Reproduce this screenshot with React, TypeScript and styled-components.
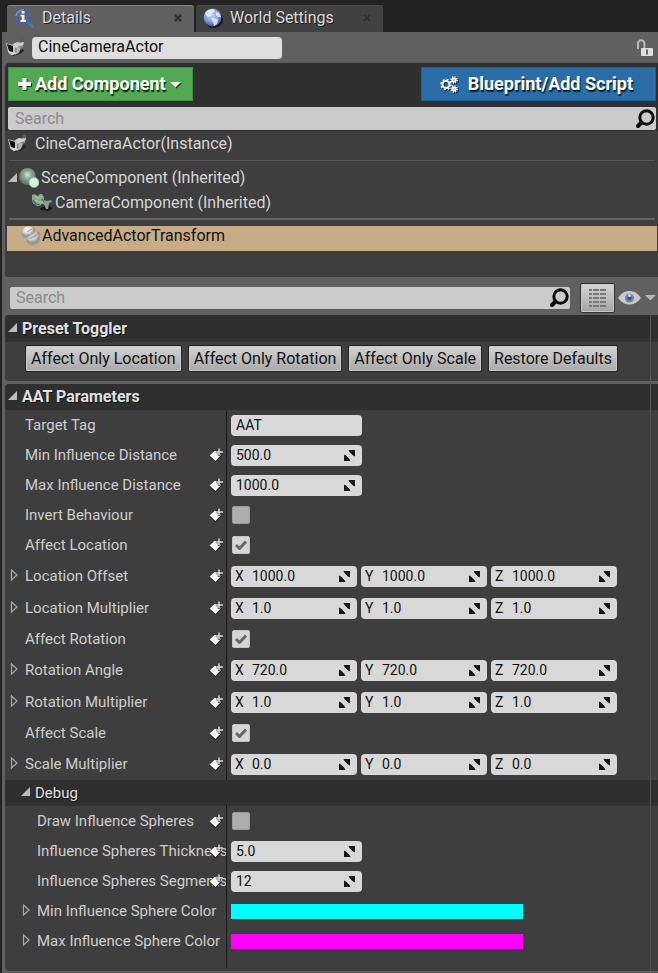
import React, { useState } from "react";
import styled, { createGlobalStyle, css } from "styled-components";

const GlobalStyle = createGlobalStyle`
  *, *::before, *::after { box-sizing: border-box; }
  body {
    margin: 0;
    background: #222222;
    color: #dcdcdc;
    font: 14px/20px Roboto, "Liberation Sans", sans-serif;
  }
  button, input {
    margin: 0;
    padding: 0;
    border: 0;
    color: inherit;
    font: inherit;
    background: none;
    letter-spacing: normal;
  }
  button { cursor: pointer; }
  svg { display: block; flex: none; }
`;

/* ---------- window chrome ---------- */

const Window = styled.main`
  min-height: 100vh;
  padding: 5px 0 0 2px;
  background: #222222;
  display: flex;
  flex-direction: column;
`;

const TabBar = styled.div`
  display: flex;
  gap: 2px;
  padding-left: 5px;
`;

const Tab = styled.div<{ $active?: boolean }>`
  display: flex;
  align-items: center;
  width: 187px;
  height: 27px;
  padding: 0 12px 2px 7px;
  border-top: 1px solid ${(p) => (p.$active ? "#a08a2c" : "#4a4a4a")};
  border-radius: 3px 3px 0 0;
  background: ${(p) => (p.$active ? "#606060" : "#414141")};
`;

const TabTitle = styled.button`
  flex: 1;
  display: flex;
  align-items: center;
  gap: 7px;
  font-size: 16px;
  color: #dadada;
  text-align: left;
  text-shadow: 1px 1px 0 #1c1c1c;
  white-space: nowrap;
`;

const PlainButton = styled.button`
  display: flex;
  align-items: center;
  justify-content: center;
  flex: none;
`;

const Panel = styled.div`
  flex: 1;
  background: #606060;
  padding-left: 3px;
  padding-bottom: 2px;
`;

const NameRow = styled.div`
  display: flex;
  align-items: center;
  height: 31px;
  padding-right: 4px;
`;

const ActorName = styled.input`
  width: 250px;
  height: 22px;
  margin: 0 auto 0 7px;
  padding: 0 6px 2px;
  border-radius: 4px;
  background: #dfdfdf;
  color: #111111;
  font-size: 16px;
`;

/* ---------- component tree ---------- */

const Components = styled.section`
  border-radius: 4px 0 0 4px;
  background: #2f2f2f;
  overflow: hidden;
`;

const ActionBar = styled.div`
  display: flex;
  justify-content: space-between;
  padding: 4px 2px 6px 3px;
`;

const ActionButton = styled.button<{ $tone: "green" | "blue" }>`
  display: flex;
  align-items: center;
  height: 34px;
  color: #ffffff;
  font-size: 18px;
  font-weight: 700;
  white-space: nowrap;
  text-shadow: 1px 2px 1px rgba(0, 0, 0, 0.75);
  svg { filter: drop-shadow(1px 1px 0 rgba(0, 0, 0, 0.7)); }
  ${(p) =>
    p.$tone === "green"
      ? css`
          gap: 4px;
          padding: 0 11px 0 9px;
          background: #52a954;
          border: 1px solid #3f9442;
        `
      : css`
          gap: 10px;
          padding: 0 22px 0 18px;
          background: #2a6da8;
          border: 1px solid #1f5f98;
        `}
`;

const SearchBox = styled.label<{ $inset?: boolean }>`
  display: flex;
  align-items: center;
  flex: 1;
  height: ${(p) => (p.$inset ? "22px" : "23px")};
  margin: ${(p) => (p.$inset ? "0" : "0 2px 0 3px")};
  padding: 0 1px 0 ${(p) => (p.$inset ? 6 : 7)}px;
  border-radius: 2px;
  background: #cbcbcb;
`;

const SearchInput = styled.input`
  flex: 1;
  min-width: 0;
  font-size: 16px;
  color: #222222;
  outline: none;
  &::placeholder { color: #8a8a8a; opacity: 1; }
`;

const Tree = styled.div`
  margin-top: 1px;
  padding-bottom: 26px;
  background: #3e3e3e;
`;

const TreeRow = styled.div<{ $indent: number; $gap?: number; $selected?: boolean }>`
  display: flex;
  align-items: center;
  gap: ${(p) => p.$gap ?? 2}px;
  height: 25px;
  margin: 0 1px 0 2px;
  padding-left: ${(p) => p.$indent}px;
  padding-bottom: ${(p) => (p.$selected ? 6 : 0)}px;
  font-size: 16px;
  white-space: nowrap;
  color: ${(p) => (p.$selected ? "#111111" : "#d6d6d6")};
  background: ${(p) => (p.$selected ? "#c7ac88" : "transparent")};
`;

const Divider = styled.hr<{ $strong?: boolean }>`
  height: ${(p) => (p.$strong ? 2 : 1)}px;
  margin: ${(p) => (p.$strong ? "3px 3px 6px 4px" : "4px 3px 4px 4px")};
  border: 0;
  background: ${(p) => (p.$strong ? "#636363" : "#585858")};
`;

/* ---------- details ---------- */

const FilterBar = styled.div`
  display: flex;
  align-items: center;
  height: 38px;
  padding: 6px 2px 3px 5px;
`;

const ViewButton = styled(PlainButton)`
  width: 35px;
  height: 30px;
  margin: 0 3px 0 10px;
  border: 1px solid #333333;
  border-radius: 2px;
  background: linear-gradient(#d6d6d6, #a4a4a4);
  box-shadow: inset 0 0 0 1px #c8c8c8;
`;

const EyeButton = styled(PlainButton)`
  gap: 4px;
`;

const Details = styled.div`
  position: relative;
  display: flex;
  flex-direction: column;
  gap: 3px;
  &::after {
    content: "";
    position: absolute;
    inset: 0 7px 0 auto;
    width: 1px;
    background: #575757;
    pointer-events: none;
  }
`;

const Section = styled.section`
  border-radius: 4px 0 0 4px;
  background: #3e3e3e;
  overflow: hidden;
`;

const SectionHeader = styled.button<{ $nested?: boolean; $tall?: boolean }>`
  display: flex;
  align-items: center;
  gap: 5px;
  width: 100%;
  height: ${(p) => (p.$tall ? 27 : 26)}px;
  padding-left: ${(p) => (p.$nested ? 16 : 3)}px;
  background: #2f2f2f;
  color: #e0e0e0;
  font-size: ${(p) => (p.$nested ? 15 : 16)}px;
  font-weight: ${(p) => (p.$nested ? 400 : 700)};
  text-shadow: 1px 1px 0 #111111;
  svg { margin-bottom: 3px; }
`;

const PresetBar = styled.div`
  display: flex;
  flex-wrap: wrap;
  gap: 6px;
  padding: 3px 20px 9px 20px;
`;

const PresetButton = styled.button`
  height: 27px;
  padding: 0 5px;
  border: 1px solid #222222;
  border-radius: 2px;
  background: linear-gradient(#d4d4d4, #a8a8a8);
  box-shadow: inset 0 0 0 1px #cccccc;
  color: #111111;
  font-size: 16px;
  white-space: nowrap;
`;

const Property = styled.div<{ $tall?: boolean }>`
  display: grid;
  grid-template-columns: 221px 1fr;
  height: ${(p) => (p.$tall ? 32 : 30)}px;
`;

const NameCell = styled.div<{ $nested?: boolean }>`
  position: relative;
  display: flex;
  align-items: center;
  overflow: hidden;
  padding-left: ${(p) => (p.$nested ? 17 : 5)}px;
`;

const ExpanderSlot = styled.span`
  display: flex;
  flex: none;
  width: 15px;
  padding-bottom: 2px;
`;

const PropertyLabel = styled.label`
  white-space: nowrap;
  font-size: 15px;
  color: #cecece;
`;

const KeyButton = styled(PlainButton)`
  position: absolute;
  top: 0;
  bottom: 0;
  right: 3px;
`;

const ValueCell = styled.div`
  display: flex;
  align-items: center;
  gap: 4px;
  padding-left: 4px;
  border-left: 1px solid #191919;
`;

const Field = styled.div<{ $axis?: boolean }>`
  display: flex;
  align-items: center;
  width: ${(p) => (p.$axis ? 126 : 131)}px;
  height: 21px;
  padding: 0 7px 0 ${(p) => (p.$axis ? 4 : 5)}px;
  border-radius: 4px;
  background: #d8d8d8;
  color: #111111;
`;

const AxisLabel = styled.label`
  flex: none;
  width: 17px;
`;

const FieldInput = styled.input`
  flex: 1;
  min-width: 0;
  width: 0;
`;

const Check = styled.input`
  appearance: none;
  width: 18px;
  height: 18px;
  margin-left: 1px;
  border-radius: 2px;
  border: 1px solid #9b9b9b;
  background: #adadad;
  cursor: pointer;
  &:checked { background: #d6d6d6; border-color: #c4c4c4; }
`;

const CheckWrap = styled.span`
  display: grid;
  > * { grid-area: 1 / 1; }
  svg { margin: 4px 0 0 4px; pointer-events: none; }
`;

const Swatch = styled.button<{ $color: string }>`
  width: 292px;
  height: 15px;
  background: ${(p) => p.$color};
`;

const BodyEnd = styled.div`
  height: 12px;
  margin: 0 0 3px 221px;
  border-left: 1px solid #191919;
`;

/* ---------- icons ---------- */

const InfoIcon = () => (
  <svg width="21" height="21" viewBox="0 0 21 21">
    <path d="M14 14.500l4.500 4" stroke="#4a76cc" strokeWidth="3" strokeLinecap="round" />
    <circle cx="9" cy="9" r="7.500" fill="#5b6472" stroke="#3c62b0" strokeWidth="1.800" />
    <path d="M2 8a7 7 0 0 1 8-6" fill="none" stroke="#7f9fe0" strokeWidth="1.200" />
    <rect x="7.500" y="3" width="3" height="2.600" fill="#eeeeee" />
    <path d="M6.500 6.800h4v5.200H12v2H6.500v-2h1.200V8.600H6.500z" fill="#eeeeee" />
  </svg>
);

const GlobeIcon = () => (
  <svg width="20" height="20" viewBox="0 0 20 20">
    <defs>
      <radialGradient id="globe" cx="45%" cy="35%" r="65%">
        <stop offset="0" stopColor="#c3d2f6" />
        <stop offset="0.600" stopColor="#86a0e0" />
        <stop offset="1" stopColor="#3d539a" />
      </radialGradient>
    </defs>
    <ellipse cx="11" cy="12" rx="9" ry="8" fill="#1b1b1b" />
    <circle cx="9.500" cy="9.500" r="9" fill="url(#globe)" />
    <path d="M2 5l3-3 5-1 2 2-3 2-1 3-3 1-2-2zM8 10l4 0 3 2-1 4-3 2-1-4zM13 4l3 1 2 4-3 0-2-2z" fill="#eef3ff" opacity="0.800" />
  </svg>
);

const CloseIcon = () => (
  <svg width="8" height="8" viewBox="0 0 8 8">
    <rect width="8" height="8" fill="#4a4a4a" opacity="0.500" />
    <path d="M1 1l6 6M7 1L1 7" stroke="#303030" strokeWidth="1.800" />
  </svg>
);

const CameraActorIcon = () => (
  <svg width="20" height="20" viewBox="0 0 20 20">
    <path d="M7 15l7-3 4-1 1 2-4 3-7 2z" fill="#242424" />
    <path d="M9 7l5-3 5 0-1 5-2 1-2 5-4 2-1-3z" fill="#8b8b8b" />
    <path d="M8 6l4-2 3 1 4-1-1 3-4 1-2 2-3-1z" fill="#cfcfcf" />
    <path d="M15 4l1-3 3-1 0 4z" fill="#5c5c5c" />
    <path d="M12 10l3-1 0 3-2 3-2 1z" fill="#b6b6b6" />
    <path d="M1 5l3 1 6 1 0 8-3 2-4-3z" fill="#c4c4c4" />
    <path d="M2 6l6 2 0 6-4-1z" fill="#0c0c0c" />
    <path d="M3 13l4 2 3-1 1 2-4 1-3-2z" fill="#d8d8d8" />
  </svg>
);

const LockIcon = () => (
  <svg width="18" height="18" viewBox="0 0 18 18" fill="none">
    <path d="M2 10V4.500a3.200 3.200 0 0 1 6.400 0V9" stroke="#b8b8b8" strokeWidth="2" />
    <rect x="5" y="9" width="12" height="8" rx="1" fill="#e0e0e0" />
    <path d="M11 10.500v5" stroke="#666666" strokeWidth="2" />
  </svg>
);

const PlusIcon = () => (
  <svg width="13" height="14" viewBox="0 0 13 14">
    <path d="M6.500 1v12M0 7h13" stroke="#ffffff" strokeWidth="4" />
  </svg>
);

const CaretIcon = ({ color = "#ffffff" }: { color?: string }) => (
  <svg width="11" height="7" viewBox="0 0 11 7">
    <path d="M0 1h11L5.500 6.500z" fill={color} />
  </svg>
);

const Gear = ({ x, y, r }: { x: number; y: number; r: number }) => (
  <g fill="none" stroke="#ffffff">
    <circle cx={x} cy={y} r={r} strokeWidth="2" />
    <circle cx={x} cy={y} r={r + 1.5} strokeWidth="1.500" strokeDasharray={`${(r + 1.5) * 0.3927} ${(r + 1.5) * 0.3927}`} />
  </g>
);

const GearsIcon = () => (
  <svg width="18" height="17" viewBox="0 0 18 17">
    <Gear x={6} y={8.5} r={3.5} />
    <Gear x={14} y={4} r={1.6} />
    <Gear x={14} y={13} r={1.6} />
  </svg>
);

const SearchIcon = () => (
  <svg width="20" height="20" viewBox="0 0 20 20" fill="none" stroke="#0c0c0c">
    <circle cx="11.500" cy="8.500" r="6.700" strokeWidth="3" />
    <path d="M6.500 13.500L3 17" strokeWidth="4" strokeLinecap="round" />
  </svg>
);

const SceneIcon = () => (
  <svg width="20" height="20" viewBox="0 0 20 20">
    <defs>
      <radialGradient id="scene" cx="50%" cy="40%">
        <stop offset="0" stopColor="#cfe8d4" />
        <stop offset="0.500" stopColor="#8da996" />
        <stop offset="1" stopColor="#64796b" />
      </radialGradient>
    </defs>
    <circle cx="8.500" cy="8.500" r="8.500" fill="url(#scene)" />
    <circle cx="15" cy="14.500" r="5" fill="#d5f5dc" stroke="#98b5a0" strokeWidth="0.800" />
  </svg>
);

const CameraComponentIcon = () => (
  <svg width="21" height="19" viewBox="0 0 21 19">
    <path d="M8 15l6-2 5 1 1 2-4 2-7-1z" fill="#161616" />
    <path d="M0 2l2-1 4 2 2-2 2 0 2 3 0 3 3 1 4-1 1 2-3 1-1 6-2 0-2-5-2 0-2 2-3 0-4-3-1-3z" fill="#86a38f" />
    <path d="M2 3l4 2 4-2M3 7l5 2 3 0" fill="none" stroke="#a3c2ac" strokeWidth="1.300" />
    <path d="M1 7l3 4 4 1M10 6l2 3" fill="none" stroke="#4c6354" strokeWidth="1.200" />
  </svg>
);

const ActorComponentIcon = () => (
  <svg width="20" height="20" viewBox="0 0 20 20">
    <defs>
      <radialGradient id="half" cx="40%" cy="30%">
        <stop offset="0" stopColor="#ffffff" />
        <stop offset="0.700" stopColor="#d2d2d2" />
        <stop offset="1" stopColor="#969696" />
      </radialGradient>
    </defs>
    <path d="M1 9C0 4 4 0 8 0c4 0 7 3 6 5L5 12C2 12 1 11 1 9z" fill="url(#half)" />
    <path d="M6 6l5-3M6 9l2-1" stroke="#a4a4a4" />
    <path d="M5 13l13-8c3 6 1 14-7 14-4 0-6-3-6-6z" fill="url(#half)" />
    <path d="M6 13l12-7-3 5-5 2z" fill="#8c8c8c" opacity="0.600" />
  </svg>
);

const ListIcon = () => (
  <svg width="17" height="18" viewBox="0 0 17 18" stroke="#777777" strokeWidth="2">
    <path d="M0 1h3M4 1h6M11 1h6M0 5h3M4 5h6M11 5h6M0 9h3M4 9h6M11 9h6M0 13h3M4 13h6M11 13h6M0 17h3M4 17h6M11 17h6" />
  </svg>
);

const EyeIcon = () => (
  <svg width="23" height="14" viewBox="0 0 23 14">
    <path d="M0 7C4 1 8 0 11.500 0S19 1 23 7c-4 5-8 6.500-11.500 6.500S4 12 0 7z" fill="#c9c9c9" />
    <circle cx="11.500" cy="7" r="4.500" fill="#6c80a8" />
    <circle cx="11.500" cy="7" r="2" fill="#354a75" />
    <circle cx="11.500" cy="4.500" r="1.500" fill="#dbe5f5" />
  </svg>
);

const ExpandedIcon = () => (
  <svg width="9" height="9" viewBox="0 0 9 9">
    <path d="M9 0v9H0z" fill="#bcbcbc" />
  </svg>
);

const CollapsedIcon = () => (
  <svg width="8" height="12" viewBox="0 0 8 12">
    <path d="M1.500 1l5.500 5-5.500 5z" fill="none" stroke="#a8a8a8" strokeWidth="1.200" />
  </svg>
);

const KeyIcon = () => (
  <svg width="14" height="14" viewBox="0 0 14 14">
    <path d="M0 8l6.500-6.500L13 8l-6.500 6z" fill="#1c1c1c" />
    <path d="M0.500 7.500L6 2.500l6 4.500-5.500 6z" fill="#f6f6f6" />
    <path d="M10 1v7M7 4H14" stroke="#2c2c2c" strokeWidth="2.400" />
    <path d="M10 0.500v7M6.500 4H14" stroke="#dddddd" strokeWidth="1.500" />
  </svg>
);

const SpinIcon = () => (
  <svg width="11" height="11" viewBox="0 0 11 11" fill="#161616">
    <path d="M4.500 0H11v6.500L9 5.500 5.500 2zM0 4.500L2 5.500 5.500 9l1 2H0z" />
  </svg>
);

const CheckIcon = () => (
  <svg width="12" height="10" viewBox="0 0 12 10">
    <path d="M1 5l3.500 3.500L11 1.500" fill="none" stroke="#686868" strokeWidth="3" />
  </svg>
);

/* ---------- data and rows ---------- */

type Item = { name: string; kind: "text" | "number" | "check" | "vector" | "color"; value: string };

const parameters: Item[] = [
  { name: "Target Tag", kind: "text", value: "AAT" },
  { name: "Min Influence Distance", kind: "number", value: "500.0" },
  { name: "Max Influence Distance", kind: "number", value: "1000.0" },
  { name: "Invert Behaviour", kind: "check", value: "" },
  { name: "Affect Location", kind: "check", value: "on" },
  { name: "Location Offset", kind: "vector", value: "1000.0" },
  { name: "Location Multiplier", kind: "vector", value: "1.0" },
  { name: "Affect Rotation", kind: "check", value: "on" },
  { name: "Rotation Angle", kind: "vector", value: "720.0" },
  { name: "Rotation Multiplier", kind: "vector", value: "1.0" },
  { name: "Affect Scale", kind: "check", value: "on" },
  { name: "Scale Multiplier", kind: "vector", value: "0.0" },
];

const debugParameters: Item[] = [
  { name: "Draw Influence Spheres", kind: "check", value: "" },
  { name: "Influence Spheres Thickness", kind: "number", value: "5.0" },
  { name: "Influence Spheres Segments", kind: "number", value: "12" },
  { name: "Min Influence Sphere Color", kind: "color", value: "#00ffff" },
  { name: "Max Influence Sphere Color", kind: "color", value: "#ff00ff" },
];

const presets = ["Affect Only Location", "Affect Only Rotation", "Affect Only Scale", "Restore Defaults"];

function CheckField({ id, initial }: { id: string; initial: boolean }) {
  const [checked, setChecked] = useState(initial);
  return (
    <CheckWrap>
      <Check id={id} type="checkbox" checked={checked} onChange={() => setChecked(!checked)} />
      {checked && <CheckIcon />}
    </CheckWrap>
  );
}

function PropertyRow({ item, nested }: { item: Item; nested?: boolean }) {
  const id = item.name.toLowerCase().replace(/ /g, "-");
  const { kind, name, value } = item;
  const expandable = kind === "vector" || kind === "color";
  const firstId = kind === "vector" ? `${id}-X` : id;
  return (
    <Property $tall={kind === "vector"}>
      <NameCell $nested={nested}>
        <ExpanderSlot>
          {expandable && (
            <PlainButton aria-label={`Expand ${name}`}>
              <CollapsedIcon />
            </PlainButton>
          )}
        </ExpanderSlot>
        <PropertyLabel htmlFor={firstId}>{name}</PropertyLabel>
        {kind !== "text" && kind !== "color" && (
          <KeyButton aria-label={`Add keyframe for ${name}`}>
            <KeyIcon />
          </KeyButton>
        )}
      </NameCell>
      <ValueCell>
        {(kind === "text" || kind === "number") && (
          <Field>
            <FieldInput id={id} defaultValue={value} />
            {kind === "number" && <SpinIcon />}
          </Field>
        )}
        {kind === "check" && <CheckField id={id} initial={value === "on"} />}
        {kind === "vector" &&
          ["X", "Y", "Z"].map((axis) => (
            <Field $axis key={axis}>
              <AxisLabel htmlFor={`${id}-${axis}`}>{axis}</AxisLabel>
              <FieldInput id={`${id}-${axis}`} defaultValue={value} />
              <SpinIcon />
            </Field>
          ))}
        {kind === "color" && <Swatch id={id} $color={value} />}
      </ValueCell>
    </Property>
  );
}

export default function App() {
  return (
    <>
      <GlobalStyle />
      <Window>
        <TabBar>
          <Tab $active>
            <TabTitle><InfoIcon />Details</TabTitle>
            <PlainButton aria-label="Close Details"><CloseIcon /></PlainButton>
          </Tab>
          <Tab>
            <TabTitle><GlobeIcon />World Settings</TabTitle>
            <PlainButton aria-label="Close World Settings"><CloseIcon /></PlainButton>
          </Tab>
        </TabBar>
        <Panel>
          <NameRow>
            <CameraActorIcon />
            <ActorName aria-label="Actor name" defaultValue="CineCameraActor" />
            <PlainButton aria-label="Lock selection"><LockIcon /></PlainButton>
          </NameRow>

          <Components>
            <ActionBar>
              <ActionButton $tone="green"><PlusIcon />Add Component<CaretIcon /></ActionButton>
              <ActionButton $tone="blue"><GearsIcon />Blueprint/Add Script</ActionButton>
            </ActionBar>
            <SearchBox>
              <SearchInput aria-label="Search components" placeholder="Search" />
              <SearchIcon />
            </SearchBox>
            <Tree>
              <TreeRow $indent={0} $gap={8}><CameraActorIcon />CineCameraActor(Instance)</TreeRow>
              <Divider />
              <TreeRow $indent={1}>
                <PlainButton aria-label="Collapse SceneComponent"><ExpandedIcon /></PlainButton>
                <SceneIcon />SceneComponent (Inherited)
              </TreeRow>
              <TreeRow $indent={25}><CameraComponentIcon />CameraComponent (Inherited)</TreeRow>
              <Divider $strong />
              <TreeRow $indent={14} $gap={1} $selected><ActorComponentIcon />AdvancedActorTransform</TreeRow>
            </Tree>
          </Components>

          <FilterBar>
            <SearchBox $inset>
              <SearchInput aria-label="Search details" placeholder="Search" />
              <SearchIcon />
            </SearchBox>
            <ViewButton aria-label="Property matrix"><ListIcon /></ViewButton>
            <EyeButton aria-label="View options"><EyeIcon /><CaretIcon color="#b8b8b8" /></EyeButton>
          </FilterBar>

          <Details>
            <Section>
              <SectionHeader $tall><ExpandedIcon />Preset Toggler</SectionHeader>
              <PresetBar>
                {presets.map((preset) => <PresetButton key={preset}>{preset}</PresetButton>)}
              </PresetBar>
            </Section>
            <Section>
              <SectionHeader><ExpandedIcon />AAT Parameters</SectionHeader>
              {parameters.map((item) => <PropertyRow key={item.name} item={item} />)}
              <SectionHeader $nested><ExpandedIcon />Debug</SectionHeader>
              {debugParameters.map((item) => <PropertyRow key={item.name} item={item} nested />)}
              <BodyEnd />
            </Section>
          </Details>
        </Panel>
      </Window>
    </>
  );
}
